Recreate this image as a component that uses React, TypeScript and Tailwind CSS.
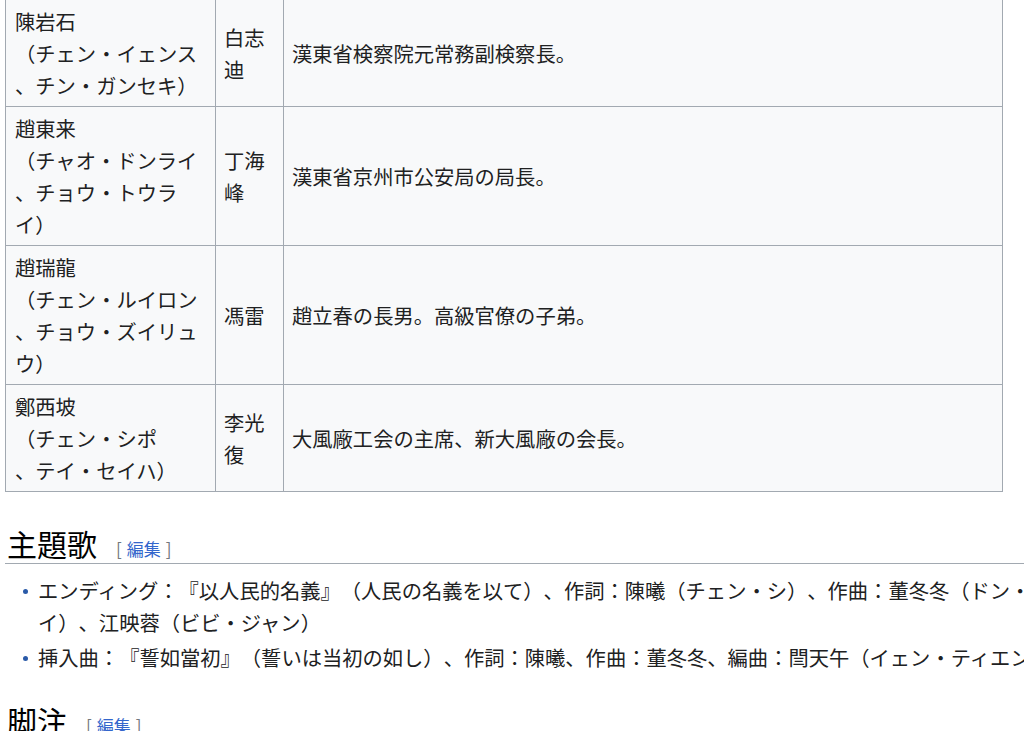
import React from 'react';

type Row = {
    name: string[];
    actor: string[];
    desc: string;
};

const rows: Row[] = [
    { name: ['陳岩石', '（チェン・イェンス', '、チン・ガンセキ）'], actor: ['白志', '迪'], desc: '漢東省検察院元常務副検察長。' },
    { name: ['趙東来', '（チャオ・ドンライ', '、チョウ・トウラ', 'イ）'], actor: ['丁海', '峰'], desc: '漢東省京州市公安局の局長。' },
    { name: ['趙瑞龍', '（チェン・ルイロン', '、チョウ・ズイリュ', 'ウ）'], actor: ['馮雷'], desc: '趙立春の長男。高級官僚の子弟。' },
    { name: ['鄭西坡', '（チェン・シポ', '、テイ・セイハ）'], actor: ['李光', '復'], desc: '大風廠工会の主席、新大風廠の会長。' },
];

const EditLink = () => (
    <span className="ml-[19px] text-[17px] leading-none font-normal text-[#72777d] whitespace-nowrap">
        [<span className="mx-[5px] text-[#3366cc]">編集</span>]
    </span>
);

const Heading = ({ title, className }: { title: string; className: string }) => (
    <h2 className={`${className} text-[30px] leading-[39px] font-normal text-[#000] border-b border-[#a2a9b1] w-[1100px] pl-[2px] whitespace-nowrap`}>
        {title}
        <EditLink />
    </h2>
);

const Lines = ({ lines }: { lines: string[] }) => (
    <>
        {lines.map((l, i) => (
            <React.Fragment key={i}>
                {i > 0 && <br />}
                {l}
            </React.Fragment>
        ))}
    </>
);

// bullet column for the list items
const Bullet = () => (
    <span className="w-[33px] shrink-0 flex justify-center pt-[15px] pl-[8px]">
        <span className="block w-[5px] h-[5px] rounded-full bg-[#2a5aa8]" />
    </span>
);

export default function App() {
    return (
        <div className="w-[1024px] h-[731px] overflow-hidden bg-white text-[#202122] [text-spacing-trim:space-all] font-['Noto_Sans_CJK_JP','Noto_Sans',sans-serif]">
            <div className="pl-[5px]">
                <table className="table-fixed border-collapse w-[998px] -mt-[1px] bg-[#f8f9fa] text-[20.3px] leading-[32px]">
                    <colgroup>
                        <col className="w-[210px]" />
                        <col className="w-[68px]" />
                        <col />
                    </colgroup>
                    <tbody>
                        {rows.map((r, i) => (
                            <tr key={i}>
                                <td className="border border-[#a2a9b1] px-[9px] py-[5px] align-middle whitespace-nowrap">
                                    <Lines lines={r.name} />
                                </td>
                                <td className="border border-[#a2a9b1] px-[8px] py-[5px] align-middle whitespace-nowrap">
                                    <Lines lines={r.actor} />
                                </td>
                                <td className="border border-[#a2a9b1] px-[8px] py-[5px] align-middle">
                                    {r.desc}
                                </td>
                            </tr>
                        ))}
                    </tbody>
                </table>

                <Heading title="主題歌" className="mt-[32px]" />

                <ul className="mt-[10px] text-[20.3px] leading-[32px] whitespace-nowrap">
                    <li className="flex mb-[3px]">
                        <Bullet />
                        <span>
                            エンディング：『以人民的名義』（人民の名義を以て）、作詞：陳曦（チェン・シ）、作曲：董冬冬（ドン・ドンドン、トウ・トウトウ）、歌：韓磊（ハン・レイ、カン・ラ
                            <br />
                            イ）、江映蓉（ビビ・ジャン）
                        </span>
                    </li>
                    <li className="flex mb-[3px]">
                        <Bullet />
                        <span>
                            挿入曲：『誓如當初』（誓いは当初の如し）、作詞：陳曦、作曲：董冬冬、編曲：閆天午（イェン・ティエンウー）、歌：王凱
                        </span>
                    </li>
                </ul>

                <Heading title="脚注" className="mt-[28px]" />
            </div>
        </div>
    );
}
